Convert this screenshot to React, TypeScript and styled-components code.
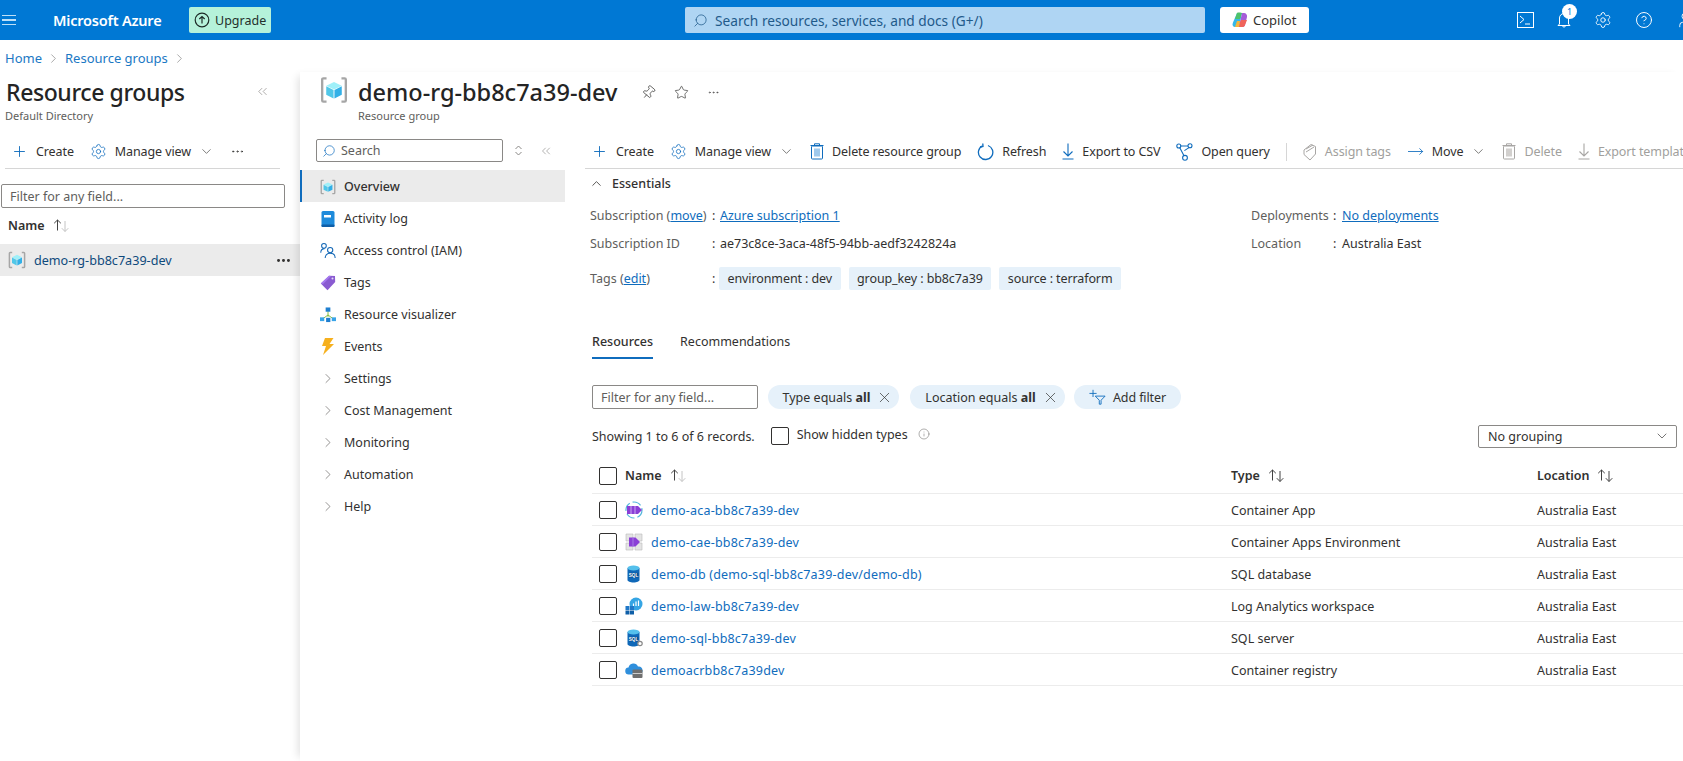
import React from "react";
import styled, { createGlobalStyle } from "styled-components";
import { Plus, ChevronDown, ChevronRight, ChevronUp, ChevronsLeft, X, Star, Pin, Info, Settings, Search, Ellipsis, HelpCircle, MoveRight, User } from "lucide-react";

const Global = createGlobalStyle`
  html, body { margin: 0; padding: 0; background: #fff; overflow: hidden; }
  body { font-family: "Noto Sans", "Open Sans", sans-serif; font-size: 13px; color: #323130; }
  * { box-sizing: border-box; }
  a { color: #0f6cbd; text-decoration: none; }
`;

const Page = styled.div`width: 1683px; height: 761px; overflow: hidden; display: flex; flex-direction: column;`;

/* top bar */
const TopBar = styled.header`height: 40px; background: #0078d4; display: flex; align-items: center; color: #fff; flex: none; overflow: hidden;`;
const Burger = styled.div`width: 14px; flex: none; margin-left: 2px; display: flex; flex-direction: column; gap: 3px; span { height: 1.5px; background: #bfe0f7; display: block; }`;
const Brand = styled.div`margin-left: 37px; width: 108px; flex: none; font-size: 14.5px; font-weight: 600; white-space: nowrap; letter-spacing: -0.2px;`;
const Upgrade = styled.div`margin-left: 28px; width: 82px; flex: none; height: 26px; background: #b5f2da; border-radius: 2px; color: #24302c; display: flex; align-items: center; gap: 5px; padding-left: 5px; font-size: 12.5px;`;
const GlobalSearch = styled.div`margin-left: 414px; width: 520px; flex: none; height: 26px; background: #afd5f3; border-radius: 2px; display: flex; align-items: center; gap: 7px; padding-left: 8px; color: #1f5a8a; font-size: 13.7px; white-space: nowrap; svg { transform: scaleX(-1); }`;
const CopilotBtn = styled.div`margin-left: 15px; width: 89px; flex: none; height: 26px; background: #fff; border-radius: 3px; display: flex; align-items: center; gap: 5px; padding-left: 12px; color: #323130; font-size: 13px;`;
const TopIcons = styled.div`margin-left: 208px; display: flex; align-items: center; gap: 23px; flex: none;`;
const Bell = styled.div`position: relative; width: 14px; height: 16px; display: flex;`;
const Badge = styled.span`position: absolute; left: 5px; top: -8px; width: 15px; height: 15px; border-radius: 50%; background: #fff; color: #0078d4; font-size: 9px; display: flex; align-items: center; justify-content: center;`;

/* breadcrumb */
const Crumbs = styled.nav`height: 32px; flex: none; display: flex; align-items: center; padding: 4px 0 0 5px; gap: 4px; font-size: 13px; a { color: #1b78c4; } svg { color: #777; }`;

const Body = styled.div`flex: 1; display: flex; min-height: 0;`;

/* left blade */
const LeftBlade = styled.aside`width: 300px; flex: none; display: flex; flex-direction: column; padding-top: 4px;`;
const BladeHead = styled.div`display: flex; justify-content: space-between; align-items: flex-start; padding: 0 10px 0 6px;`;
const BladeTitle = styled.h1`margin: 0; font-size: 23px; line-height: 32px; font-weight: 500; letter-spacing: -0.4px; color: #242424; white-space: nowrap;`;
const Collapse = styled.span`display: flex; color: #8a8886; margin: 8px 20px 0 0;`;
const BladeSub = styled.div`font-size: 11px; line-height: 16px; color: #605e5c; padding-left: 5px;`;
const Toolbar = styled.div`height: 33px; margin-top: 11px; display: flex; align-items: center; gap: 16px; white-space: nowrap; overflow: hidden;`;
const LeftToolbar = styled(Toolbar)`margin-left: 5px; margin-right: 20px; padding-left: 6px; border-bottom: 1px solid #d6d6d6; height: 34px;`;
const ToolBtn = styled.span<{ $muted?: boolean }>`display: inline-flex; align-items: center; gap: 8px; color: ${p => (p.$muted ? "#a19f9d" : "#323130")}; flex: none; font-size: 12.5px; letter-spacing: -0.1px;`;
const ToolSep = styled.span`width: 1px; height: 18px; background: #d6d6d6; flex: none;`;
const FilterInput = styled.div<{ $w: number }>`width: ${p => p.$w}px; height: 24px; border: 1px solid #8a8886; border-radius: 2px; display: flex; align-items: center; padding-left: 8px; color: #605e5c; font-size: 12.5px; flex: none;`;
const LeftFilter = styled(FilterInput)`margin: 15px 0 0 1px;`;
const LeftHeader = styled.div`height: 35px; display: flex; align-items: center; gap: 8px; padding-left: 8px; font-weight: 600; font-size: 12.5px; margin-bottom: 1px;`;
const LeftRow = styled.div`height: 32px; background: #ebebeb; display: flex; align-items: center; gap: 8px; padding: 0 8px; color: #0f4a7c; font-size: 12.6px;`;
const RowDots = styled.span`margin-left: auto; display: flex; color: #323130;`;

/* right blade */
const RightBlade = styled.section`flex: 1; min-width: 0; display: flex; flex-direction: column; box-shadow: -6px 0 8px -4px rgba(0,0,0,0.12);`;
const ResHead = styled.div`height: 48px; margin-top: 4px; display: flex; padding-left: 20px; gap: 10px; flex: none;`;
const ResTitleBox = styled.div`display: flex; flex-direction: column;`;
const ResTitle = styled.div`display: flex; align-items: center; font-size: 23.5px; line-height: 32px; font-weight: 500; color: #242424; white-space: nowrap;`;
const TitleActions = styled.div`display: flex; align-items: center; gap: 18px; margin-left: 24px; color: #323130;`;
const TiltedPin = styled(Pin)`transform: rotate(40deg);`;
const ResSub = styled.div`font-size: 11px; line-height: 16px; color: #605e5c;`;
const Split = styled.div`flex: 1; display: flex; min-height: 0;`;

/* nav */
const Nav = styled.nav`width: 265px; flex: none; padding-top: 15px;`;
const NavTop = styled.div`display: flex; align-items: center; padding-left: 16px; margin-bottom: 8px;`;
const NavSearch = styled.div`width: 187px; height: 23px; border: 1px solid #8a8886; border-radius: 2px; display: flex; align-items: center; gap: 5px; padding-left: 5px; color: #605e5c; font-size: 12.5px; svg { transform: scaleX(-1); color: #0f6cbd; }`;
const NavTool = styled.span<{ $ml: number }>`display: flex; margin-left: ${p => p.$ml}px; color: #8a8886;`;
const NavItem = styled.div<{ $active?: boolean }>`height: 32px; display: flex; align-items: center; gap: 8px; padding-left: ${p => (p.$active ? 18 : 20)}px; padding-top: 1px; font-size: 12.5px; color: #323130; font-weight: ${p => (p.$active ? 500 : 400)}; background: ${p => (p.$active ? "#ebebeb" : "transparent")}; border-left: ${p => (p.$active ? "2px solid #0f6cbd" : "none")};`;
const NavIcon = styled.span`width: 16px; height: 16px; display: flex; align-items: center; justify-content: center; flex: none; color: #605e5c;`;

/* main */
const Main = styled.main`flex: 1; min-width: 0; padding-left: 20px; overflow: hidden;`;
const MainToolbar = styled(Toolbar)`height: 34px; padding-left: 6px; border-bottom: 1px solid #d6d6d6;`;
const EssHead = styled.div`height: 28px; display: flex; align-items: center; gap: 8px; padding-left: 4px; font-size: 12.5px; font-weight: 500;`;
const EssGrid = styled.div`display: grid; grid-template-columns: 661px 1fr; padding-left: 5px; margin-top: 4px;`;
const EssRow = styled.div`height: 28px; display: flex; align-items: center; font-size: 12.5px;`;
const EssKey = styled.span<{ $w: number }>`width: ${p => p.$w}px; color: #605e5c; flex: none; white-space: nowrap;`;
const EssColon = styled.span<{ $w: number }>`width: ${p => p.$w}px; flex: none; color: #323130;`;
const ULink = styled.a`color: #0f6cbd; text-decoration: underline;`;
const TagRow = styled.div`display: flex; align-items: center; padding-left: 5px; margin-top: 9px; height: 24px; font-size: 12.5px;`;
const Chip = styled.span`height: 23px; display: flex; align-items: center; padding: 0 8.5px; background: #e6f1fa; border-radius: 2px; margin-right: 8px; white-space: nowrap; flex: none; letter-spacing: -0.1px;`;
const Tabs = styled.div`display: flex; gap: 27px; margin: 35px 0 0 7px; height: 34px;`;
const Tab = styled.div<{ $active?: boolean }>`font-size: 12.5px; line-height: 34px; font-weight: ${p => (p.$active ? 500 : 400)}; color: #323130; border-bottom: ${p => (p.$active ? "2px solid #0f6cbd" : "none")}; height: 34px;`;
const FilterBar = styled.div`display: flex; align-items: center; margin: 26px 0 0 7px; height: 24px; font-size: 12.5px;`;
const Pill = styled.div<{ $w: number; $ml: number }>`width: ${p => p.$w}px; margin-left: ${p => p.$ml}px; height: 24px; border-radius: 12px; background: #e6f1fa; display: flex; align-items: center; justify-content: center; gap: 6px; white-space: nowrap; flex: none; padding-left: 9px; b { font-weight: 700; }`;
const AddPill = styled(Pill)`gap: 7px; padding-left: 0; letter-spacing: -0.1px;`;
const InfoRow = styled.div`display: flex; align-items: center; margin: 15px 0 0 7px; height: 24px; padding-right: 6px; font-size: 12.5px;`;
const Box = styled.span`width: 18px; height: 18px; border: 1px solid #323130; border-radius: 2px; flex: none; display: block; background: #fff;`;
const HiddenBox = styled(Box)`margin-left: 16px;`;
const HiddenLabel = styled.span`margin: -4px 0 0 8px; white-space: nowrap;`;
const InfoMark = styled.span`display: flex; margin: -4px 0 0 10px; color: #605e5c;`;
const Select = styled.div`margin-left: auto; width: 199px; height: 23px; border: 1px solid #8a8886; border-radius: 2px; display: flex; align-items: center; justify-content: space-between; padding: 0 6px 0 9px;`;
const TableRow = styled.div<{ $head?: boolean }>`margin-left: 7px; display: grid; grid-template-columns: 639px 306px 1fr; height: ${p => (p.$head ? 34 : 32)}px; margin-top: ${p => (p.$head ? 12 : 0)}px; padding-top: ${p => (p.$head ? 0 : 1)}px; padding-bottom: ${p => (p.$head ? 2 : 0)}px; border-bottom: 1px solid #ececec; align-items: center; font-size: 12.5px; font-weight: ${p => (p.$head ? 600 : 400)};`;
const NameCell = styled.div`display: flex; align-items: center; padding-left: 7px; min-width: 0; white-space: nowrap;`;
const HeadName = styled.span`margin-left: 8px;`;
const HeadSort = styled.span`display: flex; margin-left: 8px;`;
const RowIcon = styled.span`margin-left: 8px; width: 18px; height: 18px; display: flex; flex: none;`;
const RowLink = styled.a`margin-left: 8px; color: #0f6cbd; letter-spacing: 0.2px;`;
const HeadCell = styled.div`display: flex; align-items: center; gap: 8px; white-space: nowrap;`;
const Plain = styled.div`white-space: nowrap;`;

/* drawings */
const RgIcon = ({ s = 18 }: { s?: number }) => (
  <svg width={s} height={s} viewBox="0 0 18 18">
    <path d="M4.2 1.5H2.2a.8.8 0 0 0-.8.8v13.4c0 .4.4.8.8.8h2M13.8 1.5h2c.4 0 .8.4.8.8v13.4c0 .4-.4.8-.8.8h-2" fill="none" stroke="#a6a6a6" strokeWidth="1.5" />
    <polygon points="9,3.8 14,6.2 9,8.7 4,6.2" fill="#9ff0f9" />
    <polygon points="4,6.6 8.7,9 8.7,14.4 4,12" fill="#50c7e8" />
    <polygon points="14,6.6 9.3,9 9.3,14.4 14,12" fill="#32b0e7" />
  </svg>
);
const Trash = ({ c = "#0f6cbd", f = "#9fc9ec" }: { c?: string; f?: string }) => (
  <svg width="14" height="17" viewBox="0 0 14 17" fill="none">
    <rect x="1.5" y="3" width="11" height="13" rx=".8" stroke={c} /><rect x="4" y="5.5" width="6" height="8" fill={f} />
    <path d="M0.5 2.5h13M4.5 2.5V.8h5v1.7" stroke={c} />
  </svg>
);
const Refresh = () => (
  <svg width="17" height="18" viewBox="0 0 17 18" fill="none" stroke="#0f6cbd" strokeWidth="1.3">
    <path d="M5.5 2.8A7.2 7.2 0 1 0 11 2.5" /><path d="M5.8.5 6 3.5 3 4" />
  </svg>
);
const DownArrow = ({ c = "#0f6cbd" }: { c?: string }) => (
  <svg width="12" height="17" viewBox="0 0 12 17" fill="none" stroke={c} strokeWidth="1.1">
    <path d="M6 .5v12M1.5 8.5 6 13l4.500-4.500M.5 16h11" />
  </svg>
);
const Query = () => (
  <svg width="17" height="18" viewBox="0 0 17 18" fill="none" stroke="#0f6cbd" strokeWidth="1.1">
    <circle cx="2.8" cy="3" r="2" /><circle cx="14" cy="2.8" r="2" /><circle cx="9" cy="14.8" r="2.4" />
    <path d="M4.8 3h7.2M3.8 4.8l4.2 8M13 4.6 8.4 7.6" />
  </svg>
);
const AssignTag = () => (
  <svg width="14" height="18" viewBox="0 0 14 18" fill="none" stroke="#a8a6a4" strokeWidth="1">
    <path d="M1 7 8 1.5l4.5 2V11L7 17 1 11.5Z" /><path d="M3 6 10 2M3 9l8-5" />
  </svg>
);
const FilterAdd = () => (
  <svg width="17" height="18" viewBox="0 0 19 18" fill="none" stroke="#0f6cbd" strokeWidth="1">
    <path d="M4.5 1v8M.5 5h8M7 8h11l-4.5 4.600V17h-2v-4.400Z" />
  </svg>
);
const Sort = ({ dim }: { dim?: boolean }) => (
  <svg width="17" height="13" viewBox="0 0 17 13" fill="none" strokeWidth="1">
    <path d="M4.5 11.500V1M1.200 4.200 4.500 1l3.300 3.200" stroke="#424242" />
    <path d="M12 2v10.500M8.800 9.200 12 12.500l3.300-3.300" stroke={dim ? "#c4c4c4" : "#424242"} />
  </svg>
);
const Copilot = () => (
  <svg width="16" height="16" viewBox="0 0 16 16">
    <path d="M5 1h5l-3 14H3C1 15 0 13 .8 11Z" fill="#35b8e8" /><path d="M5 1c1-.6 2-.6 5 0l-2 6H3Z" fill="#4fc26b" />
    <path d="M10 1h2c2 0 3.400 2 3 4l-2 8c-.4 1.400-1.400 2-3 2H7Z" fill="#a55cd8" /><path d="M9 8h6l-2 5c-.4 1.400-1.400 2-3 2H6Z" fill="#f0645a" /><path d="M3 15l2-6h3l-1 6Z" fill="#f5b63c" />
  </svg>
);
const Terminal = () => (
  <svg width="17" height="16" viewBox="0 0 17 16" fill="none" stroke="#fff" strokeWidth="1"><rect x=".5" y=".5" width="16" height="15" /><path d="M3 4l4 3.500-4 3.500M8 12h5" /></svg>
);
const BellIcon = () => (
  <svg width="14" height="16" viewBox="0 0 14 16" fill="none" stroke="#fff" strokeWidth="1"><path d="M2.500 12V6a4.500 4.500 0 0 1 9 0v6l1.500 1.500H1Z" /><path d="M5.500 14a1.600 1.600 0 0 0 3 0" /></svg>
);
const ActivityLog = () => (
  <svg width="14" height="16" viewBox="0 0 14 16"><rect width="13" height="16" x=".5" rx="1.500" fill="#1f8bdb" /><rect x=".5" y="13.500" width="13" height="2.500" rx="1" fill="#0f5fa8" /><rect x="3" y="4" width="7" height="2.500" fill="#fff" /></svg>
);
const Iam = () => (
  <svg width="17" height="17" viewBox="0 0 17 17" fill="none" stroke="#1468b6" strokeWidth="1.1">
    <circle cx="4.200" cy="3.500" r="2.500" /><circle cx="10.800" cy="8" r="2.800" /><path d="M.8 11c0-3 1.500-4.500 4-4.500M5.500 16.500c0-3 2-5 5.300-5s5.300 2 5.300 5" />
  </svg>
);
const TagIcon = () => (
  <svg width="16" height="16" viewBox="0 0 16 16"><path d="M.8 8.500 9 .8l6 .2.200 6-7.700 8.200Z" fill="#8a5bd1" /><path d="M.8 8.500 9 .8l2 .2-8 8Z" fill="#a67af0" /><circle cx="12.500" cy="3.500" r="1" fill="#e5dcf7" /></svg>
);
const Visualizer = () => (
  <svg width="17" height="16" viewBox="0 0 17 16"><path d="M8.500 4v6M3 12l5.500-4 5.500 4" stroke="#7fba3a" fill="none" /><rect x="6" y="0" width="5" height="4.500" fill="#1f7fd0" /><rect x="0" y="10.500" width="4.500" height="4" fill="#38a4e8" /><rect x="6.500" y="11" width="4.500" height="4.500" fill="#1f7fd0" /><rect x="12.500" y="10.500" width="4.500" height="4" fill="#38a4e8" /></svg>
);
const Bolt = () => (
  <svg width="14" height="17" viewBox="0 0 14 17"><path d="M8 0H4L1 8h4L2 17 13 6H8.500L12.500 0Z" fill="#f6b01e" /></svg>
);
const AcaIcon = () => (
  <svg width="18" height="18" viewBox="0 0 18 18" fill="none"><circle cx="9" cy="9" r="8" stroke="#54b6dc" strokeWidth="1.200" strokeDasharray="9 3" /><path d="M2 5h11l4 4-4 4H2Z" fill="#8a3fd6" /><path d="M6 5v8M10 5v8" stroke="#c9a8f1" /></svg>
);
const CaeIcon = () => (
  <svg width="18" height="18" viewBox="0 0 18 18" fill="none"><path d="M1 1h7v7H1ZM10 1h7v7h-7ZM1 10h7v7H1ZM10 10h7v7h-7Z" fill="#e4e4e4" stroke="#b9b9b9" strokeWidth=".6" /><path d="M4 4.500h6.500L15 9l-4.500 4.500H4Z" fill="#8a3fd6" /><path d="M8 4.500v9" stroke="#a77de4" /></svg>
);
const SqlDb = ({ gear }: { gear?: boolean }) => (
  <svg width="18" height="18" viewBox="0 0 18 18">
    <path d="M2.500 3v12c0 1.300 2.600 2.500 6 2.500s6-1.200 6-2.500V3Z" fill="#0f68b8" /><ellipse cx="8.500" cy="3" rx="6" ry="2.500" fill="#55c0ec" />
    <rect x="3.800" y="7.800" width="9.500" height="4.600" fill="#0a4f8f" />
    <text x="8.500" y="11.700" textAnchor="middle" fontSize="4.600" fill="#fff" fontWeight="700" fontFamily="Liberation Sans">SQL</text>
    {gear && <circle cx="15" cy="14.500" r="2.200" fill="#fff" stroke="#888" strokeWidth="1.200" />}
  </svg>
);
const LawIcon = () => (
  <svg width="18" height="18" viewBox="0 0 18 18"><circle cx="11" cy="7" r="6.500" fill="#35a5e4" /><path d="M8.500 9V6.500M11 9V4.500M13.500 9V3.500" stroke="#fff" strokeWidth="1.200" /><rect x=".5" y="9" width="4" height="4" fill="#1f78c8" /><rect x="5" y="9" width="4" height="4" fill="#1f78c8" /><rect x=".5" y="13.500" width="4" height="4" fill="#0f5fa8" /><rect x="5" y="13.500" width="4" height="4" fill="#0f5fa8" /></svg>
);
const AcrIcon = () => (
  <svg width="18" height="18" viewBox="0 0 18 18"><path d="M4 13.500a3.500 3.500 0 0 1-.5-7A5 5 0 0 1 13 5.500a4 4 0 0 1 1 8Z" fill="#2f8fdc" /><rect x="7.500" y="8.500" width="10" height="8.500" rx="1" fill="#6f6f6f" /><path d="M7.500 12.500h10" stroke="#ccc" /></svg>
);

const rows: [string, React.ReactNode, string][] = [
  ["demo-aca-bb8c7a39-dev", <AcaIcon />, "Container App"],
  ["demo-cae-bb8c7a39-dev", <CaeIcon />, "Container Apps Environment"],
  ["demo-db (demo-sql-bb8c7a39-dev/demo-db)", <SqlDb />, "SQL database"],
  ["demo-law-bb8c7a39-dev", <LawIcon />, "Log Analytics workspace"],
  ["demo-sql-bb8c7a39-dev", <SqlDb gear />, "SQL server"],
  ["demoacrbb8c7a39dev", <AcrIcon />, "Container registry"],
];
const navItems: [string, React.ReactNode][] = [
  ["Activity log", <ActivityLog />],
  ["Access control (IAM)", <Iam />],
  ["Tags", <TagIcon />],
  ["Resource visualizer", <Visualizer />],
  ["Events", <Bolt />],
];
const groups = ["Settings", "Cost Management", "Monitoring", "Automation", "Help"];
const blue = "#0f6cbd";

export default function App() {
  return (
    <Page>
      <Global />
      <TopBar>
        <Burger><span /><span /><span /></Burger>
        <Brand>Microsoft Azure</Brand>
        <Upgrade>
          <svg width="16" height="16" viewBox="0 0 16 16" fill="none" stroke="#1c2b26" strokeWidth="1.200"><circle cx="8" cy="8" r="6.800" /><path d="M8 11.500v-7M5.300 7 8 4.500 10.700 7" /></svg>
          Upgrade
        </Upgrade>
        <GlobalSearch><Search size={15} strokeWidth={1.2} />Search resources, services, and docs (G+/)</GlobalSearch>
        <CopilotBtn><Copilot />Copilot</CopilotBtn>
        <TopIcons>
          <Terminal />
          <Bell><BellIcon /><Badge>1</Badge></Bell>
          <Settings size={18} strokeWidth={1.200} />
          <HelpCircle size={18} strokeWidth={1.300} />
          <User size={18} strokeWidth={1.200} />
        </TopIcons>
      </TopBar>
      <Crumbs>
        <a>Home</a><ChevronRight size={15} strokeWidth={1} />
        <a>Resource groups</a><ChevronRight size={15} strokeWidth={1} />
      </Crumbs>
      <Body>
        <LeftBlade>
          <BladeHead>
            <BladeTitle>Resource groups</BladeTitle>
            <Collapse><ChevronsLeft size={15} strokeWidth={1.100} /></Collapse>
          </BladeHead>
          <BladeSub>Default Directory</BladeSub>
          <LeftToolbar>
            <ToolBtn><Plus size={17} color={blue} strokeWidth={1.300} />Create</ToolBtn>
            <ToolBtn><Settings size={17} color={blue} strokeWidth={1.100} />Manage view<ChevronDown size={15} strokeWidth={1} /></ToolBtn>
            <ToolBtn><Ellipsis size={15} strokeWidth={1.200} /></ToolBtn>
          </LeftToolbar>
          <LeftFilter $w={284}>Filter for any field...</LeftFilter>
          <LeftHeader>Name <Sort dim /></LeftHeader>
          <LeftRow>
            <RgIcon />demo-rg-bb8c7a39-dev
            <RowDots><Ellipsis size={17} strokeWidth={2.200} /></RowDots>
          </LeftRow>
        </LeftBlade>
        <RightBlade>
          <ResHead>
            <RgIcon s={28} />
            <ResTitleBox>
              <ResTitle>
                demo-rg-bb8c7a39-dev
                <TitleActions>
                  <TiltedPin size={15} strokeWidth={1.100} />
                  <Star size={15} strokeWidth={1.100} />
                  <Ellipsis size={13} strokeWidth={1} />
                </TitleActions>
              </ResTitle>
              <ResSub>Resource group</ResSub>
            </ResTitleBox>
          </ResHead>
          <Split>
            <Nav>
              <NavTop>
                <NavSearch><Search size={14} strokeWidth={1.200} />Search</NavSearch>
                <NavTool $ml={11}>
                  <svg width="9" height="11" viewBox="0 0 9 11" fill="none" stroke="#8a8886"><path d="M1.500 4 4.500 1l3 3M1.500 7l3 3 3-3" /></svg>
                </NavTool>
                <NavTool $ml={16}><ChevronsLeft size={14} strokeWidth={1.100} /></NavTool>
              </NavTop>
              <NavItem $active><NavIcon><RgIcon s={16} /></NavIcon>Overview</NavItem>
              {navItems.map(([t, i]) => <NavItem key={t}><NavIcon>{i}</NavIcon>{t}</NavItem>)}
              {groups.map(t => <NavItem key={t}><NavIcon><ChevronRight size={17} strokeWidth={1} /></NavIcon>{t}</NavItem>)}
            </Nav>
            <Main>
              <MainToolbar>
                <ToolBtn><Plus size={17} color={blue} strokeWidth={1.300} />Create</ToolBtn>
                <ToolBtn><Settings size={17} color={blue} strokeWidth={1.100} />Manage view<ChevronDown size={15} strokeWidth={1} /></ToolBtn>
                <ToolBtn><Trash />Delete resource group</ToolBtn>
                <ToolBtn><Refresh />Refresh</ToolBtn>
                <ToolBtn><DownArrow />Export to CSV</ToolBtn>
                <ToolBtn><Query />Open query</ToolBtn>
                <ToolSep />
                <ToolBtn $muted><AssignTag />Assign tags</ToolBtn>
                <ToolBtn><MoveRight size={17} color={blue} strokeWidth={1.200} />Move<ChevronDown size={15} strokeWidth={1} /></ToolBtn>
                <ToolBtn $muted><Trash c="#a8a6a4" f="#d2d0ce" />Delete</ToolBtn>
                <ToolBtn $muted><DownArrow c="#a8a6a4" />Export template</ToolBtn>
              </MainToolbar>
              <EssHead><ChevronUp size={15} strokeWidth={1.300} />Essentials</EssHead>
              <EssGrid>
                <EssRow><EssKey $w={122}>Subscription (<ULink>move</ULink>)</EssKey><EssColon $w={8}>:</EssColon><ULink>Azure subscription 1</ULink></EssRow>
                <EssRow><EssKey $w={82}>Deployments</EssKey><EssColon $w={9}>:</EssColon><ULink>No deployments</ULink></EssRow>
                <EssRow><EssKey $w={122}>Subscription ID</EssKey><EssColon $w={8}>:</EssColon>ae73c8ce-3aca-48f5-94bb-aedf3242824a</EssRow>
                <EssRow><EssKey $w={82}>Location</EssKey><EssColon $w={9}>:</EssColon>Australia East</EssRow>
              </EssGrid>
              <TagRow>
                <EssKey $w={122}>Tags (<ULink>edit</ULink>)</EssKey><EssColon $w={7}>:</EssColon>
                <Chip>environment : dev</Chip>
                <Chip>group_key : bb8c7a39</Chip>
                <Chip>source : terraform</Chip>
              </TagRow>
              <Tabs>
                <Tab $active>Resources</Tab>
                <Tab>Recommendations</Tab>
              </Tabs>
              <FilterBar>
                <FilterInput $w={166}>Filter for any field...</FilterInput>
                <Pill $w={131} $ml={10}><span>Type equals <b>all</b></span><X size={17} strokeWidth={1} /></Pill>
                <Pill $w={155} $ml={11}><span>Location equals <b>all</b></span><X size={17} strokeWidth={1} /></Pill>
                <AddPill $w={107} $ml={9}><FilterAdd />Add filter</AddPill>
              </FilterBar>
              <InfoRow>
                <span>Showing 1 to 6 of 6 records.</span>
                <HiddenBox />
                <HiddenLabel>Show hidden types</HiddenLabel>
                <InfoMark><Info size={12} strokeWidth={1} /></InfoMark>
                <Select>No grouping<ChevronDown size={16} strokeWidth={1} /></Select>
              </InfoRow>
              <TableRow $head>
                <NameCell><Box /><HeadName>Name</HeadName><HeadSort><Sort dim /></HeadSort></NameCell>
                <HeadCell>Type <Sort /></HeadCell>
                <HeadCell>Location <Sort /></HeadCell>
              </TableRow>
              {rows.map(([n, i, t]) => (
                <TableRow key={n}>
                  <NameCell><Box /><RowIcon>{i}</RowIcon><RowLink>{n}</RowLink></NameCell>
                  <Plain>{t}</Plain>
                  <Plain>Australia East</Plain>
                </TableRow>
              ))}
            </Main>
          </Split>
        </RightBlade>
      </Body>
    </Page>
  );
}
